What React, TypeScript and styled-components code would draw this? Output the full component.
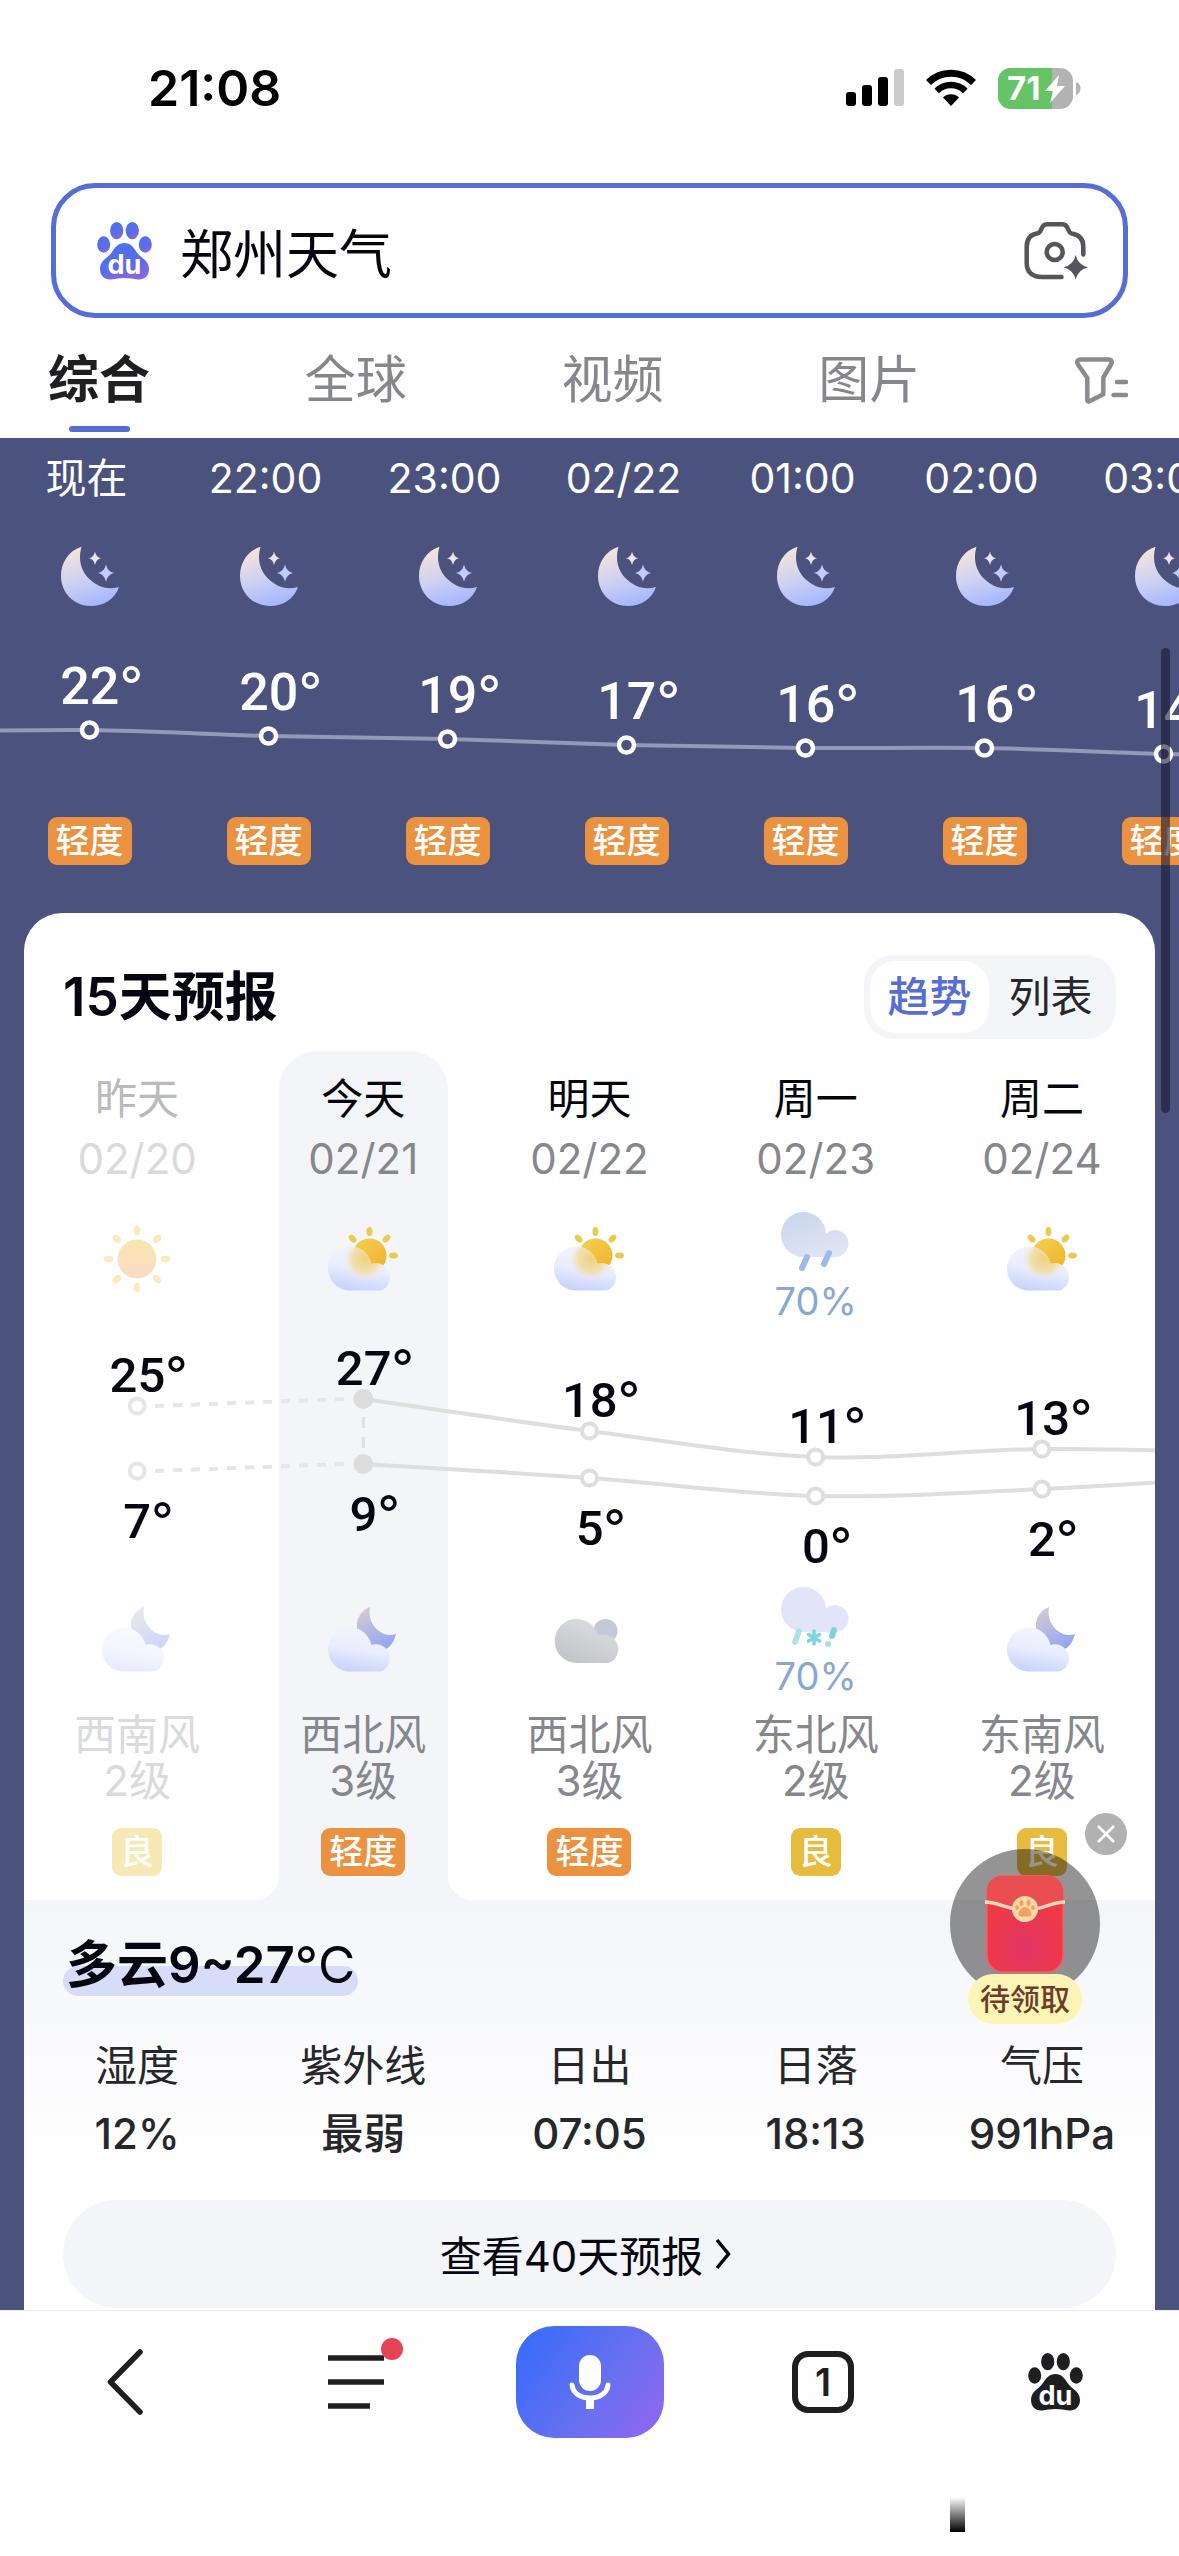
import React, { useState } from "react";
import styled, { createGlobalStyle, css } from "styled-components";

const color = {
  brand: "#566dd6",
  night: "#4b527e",
  panel: "#f4f5f9",
  ink: "#05060f",
  text: "#26272b",
  muted: "#86878c",
  faint: "#d9dadc",
  orange: "#ea923f",
  yellow: "#e6bb3e",
};

const GlobalStyle = createGlobalStyle`
  * { box-sizing: border-box; }
  body {
    margin: 0;
    background: #fff;
    color: ${color.ink};
    font-family: Inter, "Noto Sans CJK SC", sans-serif;
  }
  button, input { font: inherit; color: inherit; border: 0; padding: 0; background: none; }
  h2, h3, p, dl, dt, dd { margin: 0; font-weight: inherit; }
`;

/* ---------- data ---------- */

type Level = "轻度" | "良";
type Sky = "sun" | "partly" | "rain" | "nightCloud" | "overcast" | "sleet";

const hours: { time: string; temp: number; y: number; air: Level }[] = [
  { time: "现在", temp: 22, y: 124, air: "轻度" },
  { time: "22:00", temp: 20, y: 130, air: "轻度" },
  { time: "23:00", temp: 19, y: 133, air: "轻度" },
  { time: "02/22", temp: 17, y: 139, air: "轻度" },
  { time: "01:00", temp: 16, y: 142, air: "轻度" },
  { time: "02:00", temp: 16, y: 142, air: "轻度" },
  { time: "03:00", temp: 14, y: 148, air: "轻度" },
];

interface Day {
  name: string;
  date: string;
  day: Sky;
  night: Sky;
  rain?: string;
  high: number;
  low: number;
  highY: number;
  lowY: number;
  wind: string;
  force: string;
  air: Level;
  past?: boolean;
}

const days: Day[] = [
  { name: "昨天", date: "02/20", day: "sun", night: "nightCloud", high: 25, low: 7, highY: 77, lowY: 142, wind: "西南风", force: "2级", air: "良", past: true },
  { name: "今天", date: "02/21", day: "partly", night: "nightCloud", high: 27, low: 9, highY: 70, lowY: 135, wind: "西北风", force: "3级", air: "轻度" },
  { name: "明天", date: "02/22", day: "partly", night: "overcast", high: 18, low: 5, highY: 102, lowY: 149, wind: "西北风", force: "3级", air: "轻度" },
  { name: "周一", date: "02/23", day: "rain", night: "sleet", rain: "70%", high: 11, low: 0, highY: 128, lowY: 167, wind: "东北风", force: "2级", air: "良" },
  { name: "周二", date: "02/24", day: "partly", night: "nightCloud", high: 13, low: 2, highY: 120, lowY: 160, wind: "东南风", force: "2级", air: "良" },
];

const metrics = [
  ["湿度", "12%"],
  ["紫外线", "最弱"],
  ["日出", "07:05"],
  ["日落", "18:13"],
  ["气压", "991hPa"],
];

/* ---------- drawings ---------- */

const DefsSvg = styled.svg`
  position: absolute;
  width: 0;
  height: 0;
`;

const SharedDefs = () => (
  <DefsSvg aria-hidden="true">
    <defs>
      <linearGradient id="moon" x1="0.3" y1="0" x2="0.6" y2="1">
        <stop offset="0" stopColor="#f7e4da" />
        <stop offset="0.5" stopColor="#cfd2f0" />
        <stop offset="1" stopColor="#a5b6ff" />
      </linearGradient>
      <linearGradient id="crescent" x1="0.1" y1="0" x2="0.6" y2="1">
        <stop offset="0" stopColor="#dccbd0" />
        <stop offset="0.5" stopColor="#b3b9e4" />
        <stop offset="1" stopColor="#93a6f2" />
      </linearGradient>
      <linearGradient id="cloud" x1="0.6" y1="0" x2="0.35" y2="1">
        <stop offset="0" stopColor="#f3f5fd" />
        <stop offset="0.5" stopColor="#e9edfd" />
        <stop offset="1" stopColor="#c7d2fd" />
      </linearGradient>
      <linearGradient id="gold" x1="0" y1="0" x2="0.6" y2="1">
        <stop offset="0" stopColor="#f5cf55" />
        <stop offset="1" stopColor="#efb52d" />
      </linearGradient>
      <linearGradient id="warmSun" x1="0.5" y1="0" x2="0.5" y2="1">
        <stop offset="0" stopColor="#f5c84e" />
        <stop offset="1" stopColor="#f3b083" />
      </linearGradient>
      <radialGradient id="glow" cx="37" cy="33" r="22" gradientUnits="userSpaceOnUse">
        <stop offset="0" stopColor="#efd07a" />
        <stop offset="0.6" stopColor="#f1dc9f" stopOpacity="0.8" />
        <stop offset="1" stopColor="#f3ecd8" stopOpacity="0" />
      </radialGradient>
      <linearGradient id="rainCloud" x1="0.2" y1="0" x2="0.7" y2="1">
        <stop offset="0" stopColor="#cbd6ec" />
        <stop offset="1" stopColor="#dfe5f3" />
      </linearGradient>
      <linearGradient id="grayCloud" x1="0.8" y1="0" x2="0.2" y2="1">
        <stop offset="0" stopColor="#dedfe2" />
        <stop offset="1" stopColor="#c2c3c9" />
      </linearGradient>
      <linearGradient id="paw" x1="0.3" y1="0" x2="0.7" y2="1">
        <stop offset="0" stopColor="#4a73ea" />
        <stop offset="0.6" stopColor="#5c6bea" />
        <stop offset="1" stopColor="#8b67dc" />
      </linearGradient>
      <radialGradient id="envelope" cx="0.5" cy="0.75" r="0.6">
        <stop offset="0" stopColor="#e23468" />
        <stop offset="1" stopColor="#ef3a42" />
      </radialGradient>
    </defs>
  </DefsSvg>
);

const MoonStars = () => (
  <svg width="58" height="60" viewBox="0 0 58 60" fill="url(#moon)" aria-hidden="true">
    <path d="M20.5.7C7 5 0 17 0 30c0 17 13 30 30 30 13 0 24-7 28-19-8 2.500-16 1.500-23-3C22 30 16 17 20.500.7Z" />
    <path fill="#ece3ea" d="M34 5.500q1 5.800 6 6.800-5 1-6 6.800-1-5.800-6-6.800 5-1 6-6.800Z" />
    <path fill="#c3cbfa" d="M45 18.500q1.500 7 8 8.500-6.500 1.500-8 8.500-1.500-7-8-8.500 6.500-1.500 8-8.500Z" />
  </svg>
);

const cloudShape = "M22.500 64.500A22 22 0 1 1 43.500 38A13.500 13.500 0 1 1 52.500 64.500Z";

const SkyIcon = ({ kind }: { kind: Sky }) => {
  switch (kind) {
    case "sun":
      return (
        <svg width="70" height="68" viewBox="0 0 70 68" aria-hidden="true">
          {[0, 45, 90, 135, 180, 225, 270, 315].map((a) => (
            <ellipse key={a} cx="35" cy="5.500" rx="3.300" ry="4.800" fill="#f5d36a" transform={`rotate(${a} 35 34)`} />
          ))}
          <circle cx="35" cy="34" r="19.500" fill="url(#warmSun)" />
        </svg>
      );
    case "partly":
      return (
        <svg width="70" height="66" viewBox="0 0 70 66" aria-hidden="true">
          {[-45, 0, 45, 90].map((a) => (
            <ellipse key={a} cx="41.500" cy="5.500" rx="3" ry="4.500" fill="#ecc94f" transform={`rotate(${a} 41.500 29.500)`} />
          ))}
          <circle cx="41.500" cy="29.500" r="17" fill="url(#gold)" />
          <path d={cloudShape} fill="url(#cloud)" />
          <path d={cloudShape} fill="url(#glow)" />
        </svg>
      );
    case "nightCloud":
      return (
        <svg width="70" height="66" viewBox="0 0 70 66" aria-hidden="true">
          <path d="M42 0c-9 3-14 12-13 20 1 13 9 23 21 24 10 0 16-8 18-17-6 2-12 1-17-3C44 19 40 10 42 0Z" fill="url(#crescent)" />
          <path d={cloudShape} fill="url(#cloud)" />
        </svg>
      );
    case "overcast":
      return (
        <svg width="70" height="66" viewBox="-1 -11 70 66" aria-hidden="true">
          <circle cx="50.500" cy="13" r="12" fill="#c5c8d6" />
          <path d="M22 45A22 22 0 1 1 43 17.500A14 14 0 1 1 54 45Z" fill="url(#grayCloud)" />
        </svg>
      );
    case "rain":
      return (
        <svg width="70" height="66" viewBox="-1 -5 70 66" aria-hidden="true">
          <path d="M22 45A22.500 22.500 0 1 1 44 21.500A13.500 13.500 0 1 1 52 45Z" fill="url(#rainCloud)" />
          <g stroke="#9dbbe8" strokeWidth="6" strokeLinecap="round">
            <path d="m25 45-5 11" />
            <path d="m47 41-5 11" />
          </g>
        </svg>
      );
    case "sleet":
      return (
        <svg width="70" height="66" viewBox="-1 -5 70 66" aria-hidden="true">
          <path d="M22 45A22.500 22.500 0 1 1 44 21.500A13.500 13.500 0 1 1 52 45Z" fill="#e2e4fa" />
          <g stroke="#7fd3dc" strokeLinecap="round" fill="none">
            <path d="m17 44-4 11" strokeWidth="5.500" stroke="#a9e1e6" />
            <path d="M32 44v13M26.500 47.500l11 6.500M37.500 47.500l-11 6.500" strokeWidth="3.500" />
            <path d="m52 43-2 6" strokeWidth="6" />
            <path d="M46 57h.1" strokeWidth="6" stroke="#a9e1e6" />
          </g>
        </svg>
      );
  }
};

const PawSvg = styled.svg`
  flex: none;
  overflow: visible;
`;

const PawLogo = ({ fill }: { fill: string }) => (
  <PawSvg width="55" height="58" viewBox="0 0 55 58" role="img" aria-label="百度">
    <g fill={fill}>
      <ellipse cx="19.700" cy="8.700" rx="6.600" ry="8.600" />
      <ellipse cx="35.300" cy="8.700" rx="6.600" ry="8.600" />
      <ellipse cx="6.700" cy="22.500" rx="6.500" ry="8.300" />
      <ellipse cx="48.300" cy="22.500" rx="6.500" ry="8.300" />
      <path d="M27.500 21c6 0 9 4 12 9 4 6 12.500 8 12.500 17 0 7-5 11-11 10.500-5-.5-8-1.500-13.500-1.500s-8.500 1-13.500 1.500C8 58 3 54 3 47c0-9 8-11 12-17 3-5 6.500-9 12.500-9Z" />
    </g>
    <text x="27.500" y="52" textAnchor="middle" fill="#fff" fontSize="27" fontWeight="700">du</text>
  </PawSvg>
);

const CameraIcon = () => (
  <svg width="64" height="58" viewBox="0 0 64 58" fill="none" stroke="#55565c" strokeWidth="4.500" strokeLinecap="round" aria-hidden="true">
    <path d="M37.500 55H18C8 55 2.700 50 2.700 41V25c0-8.500 4-12.700 11-13.700 4.500-.7 2.800-9 9-9h16c6.200 0 4.500 8.300 9 9.200 8 1.300 11.600 6 11.600 13v8" />
    <circle cx="30.700" cy="30" r="8" />
    <path d="M51.700 33q2.300 10 12.300 12.300-10 2.300-12.300 12.300-2.300-10-12.300-12.300 10-2.300 12.300-12.300Z" fill="#55565c" stroke="none" />
  </svg>
);

const FilterIcon = () => (
  <svg width="53" height="47" viewBox="0 0 53 47" fill="none" stroke="#8a8b91" strokeWidth="4.500" strokeLinecap="round" strokeLinejoin="round" aria-hidden="true">
    <path d="M5.500 2.500h28c3 0 4 2.500 2.500 5l-7.700 13.200v16.600L14 44.500c-1 .3-1.700-.2-1.700-1.500V21L3 7.500c-1.500-2.500-.5-5 2.500-5Z" />
    <path d="M42 25h9M38.500 38H51" />
  </svg>
);

const SignalIcon = () => (
  <svg width="58" height="38" viewBox="0 0 58 38" aria-hidden="true">
    <rect x="0" y="23" width="10" height="14" rx="3" />
    <rect x="16" y="16" width="10" height="21" rx="3" />
    <rect x="32" y="8" width="10" height="29" rx="3" />
    <rect x="48" y="0" width="10" height="37" rx="3" fill="#cbcbcb" />
  </svg>
);

const WifiIcon = () => (
  <svg width="50" height="38" viewBox="0 0 50 38" fill="none" stroke="#000" strokeWidth="7" aria-hidden="true">
    <path d="M2.500 13.500a32 32 0 0 1 45 0" />
    <path d="M10.700 22a20.300 20.300 0 0 1 28.600 0" strokeWidth="6.500" />
    <path d="M25 37l-8-8.500a11.500 11.500 0 0 1 16 0Z" fill="#000" stroke="none" />
  </svg>
);

const BatteryIcon = () => (
  <svg width="84" height="41" viewBox="0 0 84 41" role="img" aria-label="71%">
    <rect width="75" height="41" rx="13" fill="#b3b3b3" />
    <path d="M13 0h41v41H13A13 13 0 0 1 0 28V13A13 13 0 0 1 13 0Z" fill="#65c466" />
    <path d="M78 14c6 2 6 11 0 13Z" fill="#b3b3b3" />
    <text x="9" y="32" fill="#fff" fontSize="33" fontWeight="700">71</text>
    <path d="M61 7 47 23h8l-3 12 15-17h-8Z" fill="#fff" />
  </svg>
);

const RedEnvelope = () => (
  <svg width="80" height="98" viewBox="0 0 80 98" aria-hidden="true">
    <rect x="2" y="1" width="76" height="96" rx="16" fill="url(#envelope)" stroke="#ff5a62" strokeWidth="1.500" />
    <path d="M2 17C2 7 8 1 18 1h44c10 0 16 6 16 16v10C66 27 56 35 40 35S14 27 2 27Z" fill="#ea4e50" />
    <path d="M0 27c14 0 22 8 40 8s26-8 40-8" fill="none" stroke="#fbd5bd" strokeWidth="3.500" />
    <circle cx="40" cy="34" r="13" fill="#fbd8a8" />
    <g fill="#f0a263">
      <ellipse cx="36.500" cy="28" rx="2" ry="3" />
      <ellipse cx="43.500" cy="28" rx="2" ry="3" />
      <ellipse cx="32" cy="32.500" rx="1.800" ry="2.600" />
      <ellipse cx="48" cy="32.500" rx="1.800" ry="2.600" />
      <path d="M40 32c3 0 7 4.500 6.500 7.500-.5 2.500-3.500 2-6.500 2s-6 .5-6.500-2C33 36.500 37 32 40 32Z" />
    </g>
  </svg>
);

/* ---------- charts ---------- */

type Point = { x: number; y: number };

const curve = (pts: Point[]) =>
  pts.reduce((d, p, i) => {
    if (i === 0) return `M${p.x} ${p.y}`;
    const a = pts[i - 2] ?? pts[i - 1];
    const b = pts[i - 1];
    const c = pts[i + 1] ?? p;
    return `${d}C${b.x + (p.x - a.x) / 6} ${b.y + (p.y - a.y) / 6} ${p.x - (c.x - b.x) / 6} ${p.y - (c.y - b.y) / 6} ${p.x} ${p.y}`;
  }, "");

const ChartText = styled.text`
  font-family: Roboto, "Noto Sans CJK SC", sans-serif;
  font-weight: 500;
`;

const DegreeSign = styled.tspan`
  font-family: Inter, sans-serif;
  font-weight: 400;
`;

const DIGIT = 0.5615;

/* The digits are centred on x and the degree sign hangs to their right. */
const Degrees = ({ x, y, value, size, fill }: Point & { value: number; size: number; fill: string }) => (
  <ChartText x={x - (String(value).length * DIGIT * size) / 2} y={y} fontSize={size} fill={fill}>
    {value}
    <DegreeSign>°</DegreeSign>
  </ChartText>
);

const HOUR = 179;

const HourlyChart = () => {
  const pts = hours.map((h, i) => ({ x: HOUR * (i + 0.5), y: h.y }));
  const ends = [{ x: -HOUR / 2, y: 126 }, ...pts, { x: HOUR * 7.5, y: 150 }];
  return (
    <svg width={HOUR * 7} height="211" viewBox={`0 0 ${HOUR * 7} 211`} role="img" aria-label="逐小时气温">
      <path d={curve(ends)} fill="none" stroke="#9498ba" strokeWidth="4" />
      {pts.map((p, i) => (
        <g key={p.x}>
          <circle cx={p.x} cy={p.y} r="7.500" fill={color.night} stroke="#fff" strokeWidth="4.500" />
          <Degrees x={p.x} y={p.y - 26} value={hours[i].temp} size={52} fill="#fff" />
        </g>
      ))}
    </svg>
  );
};

const DAY = 226.2;

const TrendSvg = styled.svg`
  grid-column: 1 / -1;
  grid-row: 3;
  display: block;
  width: 100%;
  height: auto;
`;

const TrendChart = () => {
  const highs = days.map((d, i) => ({ x: DAY * (i + 0.5), y: d.highY }));
  const lows = days.map((d, i) => ({ x: DAY * (i + 0.5), y: d.lowY }));
  const series = [
    { pts: highs, next: 124, label: -14, key: "high" as const },
    { pts: lows, next: 146, label: 67, key: "low" as const },
  ];
  return (
    <TrendSvg viewBox="0 0 1131 241" role="img" aria-label="15天气温趋势">
      <path
        d={`M${highs[1].x} ${highs[1].y + 18}V${lows[1].y - 12}`}
        stroke="#dfdfe0"
        strokeWidth="3"
        strokeDasharray="11 9"
      />
      {series.map(({ pts, next, label, key }) => (
        <g key={key}>
          <path
            d={`M${pts[0].x + 18} ${pts[0].y}L${pts[1].x - 18} ${pts[1].y}`}
            stroke="#e6e6e7"
            strokeWidth="4"
            strokeDasharray="9 9"
          />
          <path d={curve([...pts.slice(1), { x: DAY * 5.5, y: next }])} fill="none" stroke="#dedede" strokeWidth="4" />
          {pts.map((p, i) => (
            <g key={p.x}>
              {i === 1 ? (
                <circle cx={p.x} cy={p.y} r="10" fill="#dcdcdc" />
              ) : (
                <circle cx={p.x} cy={p.y} r="7.500" fill="#fff" stroke={i ? "#dedede" : "#e6e6e6"} strokeWidth="4" />
              )}
              <Degrees x={p.x} y={p.y + label} value={days[i][key]} size={49} fill={color.ink} />
            </g>
          ))}
        </g>
      ))}
    </TrendSvg>
  );
};

/* ---------- page shell ---------- */

const Screen = styled.div`
  display: flex;
  flex-direction: column;
  height: 100vh;
  overflow: hidden;
  background: #fefefe;
`;

const StatusBar = styled.header`
  display: flex;
  align-items: center;
  justify-content: space-between;
  flex: none;
  height: 176px;
  padding: 0 97px 0 148px;
  color: #000;
`;

const Clock = styled.time`
  font-size: 50px;
  font-weight: 600;
  line-height: 60px;
`;

const StatusIcons = styled.div`
  display: flex;
  align-items: center;
  gap: 22px;
`;

const SearchBox = styled.form`
  display: flex;
  align-items: center;
  gap: 28px;
  flex: none;
  height: 135px;
  margin: 7px 51px 0;
  padding: 0 35px 0 41px;
  border: 5px solid ${color.brand};
  border-radius: 44px;
`;

const SearchInput = styled.input`
  flex: 1;
  min-width: 0;
  height: 80px;
  font-size: 53px;
  outline: none;
`;

const IconButton = styled.button`
  display: flex;
  align-items: center;
  justify-content: center;
  cursor: pointer;
`;

const Tabs = styled.nav`
  display: flex;
  justify-content: space-between;
  flex: none;
  padding: 28px 51px 6px 48px;
`;

const Tab = styled.a<{ $active?: boolean }>`
  display: flex;
  flex-direction: column;
  align-items: center;
  gap: 12px;
  font-size: 51px;
  line-height: 68px;
  text-decoration: none;
  color: ${(p) => (p.$active ? "#1f1f21" : "#86878c")};
  font-weight: ${(p) => (p.$active ? 700 : 400)};
  &::after {
    content: "";
    width: 61px;
    height: 6px;
    border-radius: 3px;
    background: ${(p) => (p.$active ? color.brand : "transparent")};
  }
`;

const FilterButton = styled(IconButton)`
  height: 68px;
`;

const Body = styled.div`
  position: relative;
  flex: 1;
  min-height: 0;
  background: ${color.night};
`;

const Scroller = styled.main`
  height: 100%;
  overflow: hidden auto;
  scrollbar-width: none;
`;

const ScrollThumb = styled.div`
  position: absolute;
  top: 210px;
  right: 9px;
  width: 9px;
  height: 465px;
  border-radius: 5px;
  background: rgba(24, 25, 48, 0.6);
`;

/* ---------- hourly ---------- */

const Hourly = styled.section`
  padding: 12px 0 48px;
  overflow: hidden;
  color: #fff;
`;

const HourGrid = styled.div`
  display: grid;
  grid-template-columns: repeat(7, ${HOUR}px);
  justify-items: center;
`;

const HourTime = styled.div`
  padding-right: 6px;
  font-size: 41px;
  line-height: 56px;
`;

const HourIcon = styled.div`
  display: flex;
  height: 60px;
  margin-top: 40px;
`;

const HourTrend = styled.div`
  display: flex;
  grid-column: 1 / -1;
`;

const Badge = styled.span<{ $level: Level; $faded?: boolean }>`
  padding: 0 8px;
  border-radius: 9px;
  font-size: 34px;
  font-weight: 500;
  line-height: 48px;
  color: #fff;
  background: ${(p) => (p.$level === "良" ? color.yellow : color.orange)};
  ${(p) =>
    p.$faded &&
    css`
      background: #f6e9b5;
    `}
`;

/* ---------- 15-day card ---------- */

const Card = styled.section`
  margin: 0 24px;
  padding: 42px 0 24px;
  border-radius: 38px 38px 0 0;
  background: #fff;
`;

const CardHead = styled.div`
  display: flex;
  align-items: center;
  justify-content: space-between;
  padding: 0 39px;
`;

const CardTitle = styled.h2`
  font-size: 53px;
  font-weight: 600;
  line-height: 84px;
`;

const Switch = styled.div`
  display: flex;
  gap: 2px;
  padding: 6px;
  border-radius: 30px;
  background: ${color.panel};
`;

const SwitchButton = styled.button<{ $active: boolean }>`
  width: 119px;
  border-radius: 26px;
  font-size: 42px;
  line-height: 72px;
  font-weight: ${(p) => (p.$active ? 500 : 400)};
  color: ${(p) => (p.$active ? color.brand : color.text)};
  background: ${(p) => (p.$active ? "#fff" : "transparent")};
  cursor: pointer;
`;

const Trend = styled.div`
  display: grid;
  grid-template-columns: repeat(5, 1fr);
  grid-template-rows: 138px 140px auto 140px 94px 96px;
  margin-top: 12px;
  isolation: isolate;
`;

const TodayBand = styled.div`
  position: relative;
  z-index: -1;
  grid-column: 2;
  grid-row: 1 / -1;
  justify-self: center;
  width: 169px;
  border-radius: 38px 38px 0 0;
  background: ${color.panel};
  &::before,
  &::after {
    content: "";
    position: absolute;
    bottom: 0;
    width: 24px;
    height: 24px;
  }
  &::before {
    right: 100%;
    background: radial-gradient(circle at 0 0, transparent 24px, ${color.panel} 24px);
  }
  &::after {
    left: 100%;
    background: radial-gradient(circle at 100% 0, transparent 24px, ${color.panel} 24px);
  }
`;

const DayColumn = styled.article<{ $index: number }>`
  display: grid;
  grid-template-rows: subgrid;
  grid-column: ${(p) => p.$index + 1};
  grid-row: 1 / -1;
  justify-items: center;
  text-align: center;
  font-size: 42px;
`;

const DayHead = styled.div`
  padding-top: 18px;
  line-height: 60px;
`;

const DayName = styled.h3<{ $past?: boolean }>`
  font-size: inherit;
  color: ${(p) => (p.$past ? "#b9babc" : color.ink)};
`;

const DayDate = styled.p<{ $past?: boolean }>`
  color: ${(p) => (p.$past ? color.faint : color.muted)};
`;

const SkyCell = styled.div<{ $faded?: boolean; $lowered?: boolean; $row: number }>`
  grid-row: ${(p) => p.$row};
  display: flex;
  flex-direction: column;
  align-items: center;
  justify-content: center;
  gap: 6px;
  padding-top: ${(p) => (p.$lowered ? 12 : 0)}px;
  opacity: ${(p) => (p.$faded ? 0.45 : 1)};
`;

const RainChance = styled.span`
  font-size: 38px;
  line-height: 44px;
  color: #88a7d1;
`;

const Wind = styled.p<{ $past?: boolean }>`
  grid-row: 5;
  padding-top: 2px;
  line-height: 46px;
  color: ${(p) => (p.$past ? color.faint : color.muted)};
`;

const AirCell = styled.div`
  grid-row: 6;
  display: flex;
  align-items: center;
`;

const Detail = styled.div`
  padding: 28px 0 0;
  background: linear-gradient(${color.panel}, #fff 280px);
`;

const Summary = styled.h3`
  position: relative;
  z-index: 0;
  width: fit-content;
  margin-left: 39px;
  padding: 0 3px;
  font-size: 51px;
  font-weight: 600;
  line-height: 74px;
  &::before {
    content: "";
    position: absolute;
    z-index: -1;
    inset: auto 0 6px;
    height: 30px;
    border-radius: 15px;
    background: #d7dcf8;
  }
`;

const Unit = styled.span`
  font-weight: 400;
`;

const Metrics = styled.dl`
  display: grid;
  grid-template-columns: repeat(5, 1fr);
  margin-top: 34px;
  text-align: center;
  font-size: 42px;
  line-height: 60px;
  color: ${color.text};
`;

const MetricValue = styled.dd`
  margin-top: 8px;
  font-weight: 500;
`;

const MoreButton = styled.button`
  display: flex;
  align-items: center;
  justify-content: center;
  gap: 12px;
  width: calc(100% - 78px);
  height: 108px;
  margin: 36px 39px 0;
  padding-right: 8px;
  border-radius: 54px;
  font-size: 42px;
  background: ${color.panel};
  cursor: pointer;
`;

/* ---------- floating reward ---------- */

const Reward = styled.aside`
  position: absolute;
  right: 79px;
  bottom: 286px;
  display: flex;
  flex-direction: column;
  align-items: center;
`;

const RewardDisc = styled.button`
  display: flex;
  align-items: center;
  justify-content: center;
  width: 150px;
  height: 150px;
  border-radius: 50%;
  background: rgba(0, 0, 0, 0.42);
  cursor: pointer;
`;

const RewardLabel = styled.span`
  margin-top: -25px;
  padding: 0 12px;
  border-radius: 25px;
  font-size: 30px;
  font-weight: 500;
  line-height: 50px;
  color: #6e3d2a;
  background: #fcf5b6;
`;

const CloseButton = styled(IconButton)`
  position: absolute;
  top: -36px;
  right: -27px;
  width: 42px;
  height: 42px;
  border-radius: 50%;
  background: #b1b1b1;
`;

/* ---------- bottom bar ---------- */

const BottomBar = styled.nav`
  position: relative;
  display: grid;
  grid-template-columns: repeat(5, 1fr);
  flex: none;
  align-items: start;
  height: 246px;
  padding: 15px 7px 0 9px;
  border-top: 1px solid #ebebed;
  background: #fefefe;
`;

const BarButton = styled(IconButton)`
  height: 112px;
`;

const MenuGlyph = styled.span`
  position: relative;
  display: flex;
  margin-right: 4px;
`;

const Dot = styled.i`
  position: absolute;
  top: -17px;
  right: -19px;
  width: 22px;
  height: 22px;
  border-radius: 50%;
  background: #e84354;
`;

const Mic = styled.span`
  display: flex;
  align-items: center;
  justify-content: center;
  width: 148px;
  height: 112px;
  border-radius: 38px;
  background: linear-gradient(125deg, #3a6cf9 8%, #6a70f0 60%, #9565f0 100%);
`;

const TabCount = styled.span`
  width: 62px;
  height: 62px;
  border: 6px solid #1f1f21;
  border-radius: 16px;
  font-size: 38px;
  font-weight: 600;
  line-height: 50px;
  color: #1f1f21;
`;

const Stamp = styled.i`
  position: absolute;
  right: 214px;
  bottom: 24px;
  width: 15px;
  height: 35px;
  background: linear-gradient(#fff, #000);
`;

export default function App() {
  const [view, setView] = useState("趋势");
  return (
    <Screen>
      <GlobalStyle />
      <SharedDefs />
      <StatusBar>
        <Clock>21:08</Clock>
        <StatusIcons>
          <SignalIcon />
          <WifiIcon />
          <BatteryIcon />
        </StatusIcons>
      </StatusBar>

      <SearchBox role="search">
        <PawLogo fill="url(#paw)" />
        <SearchInput type="text" aria-label="搜索" defaultValue="郑州天气" />
        <IconButton type="button" aria-label="拍照搜索">
          <CameraIcon />
        </IconButton>
      </SearchBox>

      <Tabs>
        {["综合", "全球", "视频", "图片"].map((t, i) => (
          <Tab key={t} href="#" $active={i === 0}>
            {t}
          </Tab>
        ))}
        <FilterButton aria-label="筛选">
          <FilterIcon />
        </FilterButton>
      </Tabs>

      <Body>
        <Scroller>
          <Hourly>
            <HourGrid>
              {hours.map((h) => (
                <HourTime key={h.time}>{h.time}</HourTime>
              ))}
              {hours.map((h) => (
                <HourIcon key={h.time}>
                  <MoonStars />
                </HourIcon>
              ))}
              <HourTrend>
                <HourlyChart />
              </HourTrend>
              {hours.map((h) => (
                <Badge key={h.time} $level={h.air}>
                  {h.air}
                </Badge>
              ))}
            </HourGrid>
          </Hourly>

          <Card>
            <CardHead>
              <CardTitle>15天预报</CardTitle>
              <Switch>
                {["趋势", "列表"].map((v) => (
                  <SwitchButton key={v} $active={v === view} aria-pressed={v === view} onClick={() => setView(v)}>
                    {v}
                  </SwitchButton>
                ))}
              </Switch>
            </CardHead>

            <Trend>
              <TodayBand />
              {days.map((d, i) => (
                <DayColumn key={d.date} $index={i}>
                  <DayHead>
                    <DayName $past={d.past}>{d.name}</DayName>
                    <DayDate $past={d.past}>{d.date}</DayDate>
                  </DayHead>
                  <SkyCell $row={2} $faded={d.past} $lowered={!!d.rain}>
                    <SkyIcon kind={d.day} />
                    {d.rain && <RainChance>{d.rain}</RainChance>}
                  </SkyCell>
                  <SkyCell $row={4} $faded={d.past}>
                    <SkyIcon kind={d.night} />
                    {d.rain && <RainChance>{d.rain}</RainChance>}
                  </SkyCell>
                  <Wind $past={d.past}>
                    {d.wind}
                    <br />
                    {d.force}
                  </Wind>
                  <AirCell>
                    <Badge $level={d.air} $faded={d.past}>
                      {d.air}
                    </Badge>
                  </AirCell>
                </DayColumn>
              ))}
              <TrendChart />
            </Trend>

            <Detail>
              <Summary>
                多云9~27<Unit>°C</Unit>
              </Summary>
              <Metrics>
                {metrics.map(([label, value]) => (
                  <div key={label}>
                    <dt>{label}</dt>
                    <MetricValue>{value}</MetricValue>
                  </div>
                ))}
              </Metrics>
              <MoreButton>
                查看40天预报
                <svg width="16" height="32" viewBox="0 0 16 32" fill="none" stroke={color.ink} strokeWidth="3.500" aria-hidden="true">
                  <path d="m2 2 11.500 14L2 30" />
                </svg>
              </MoreButton>
            </Detail>
          </Card>
        </Scroller>
        <ScrollThumb />
        <Reward>
          <RewardDisc aria-label="领取红包">
            <RedEnvelope />
          </RewardDisc>
          <RewardLabel>待领取</RewardLabel>
          <CloseButton aria-label="关闭">
            <svg width="18" height="18" viewBox="0 0 18 18" stroke="#fff" strokeWidth="2.500" aria-hidden="true">
              <path d="m1 1 16 16M17 1 1 17" />
            </svg>
          </CloseButton>
        </Reward>
      </Body>

      <BottomBar>
        <BarButton aria-label="返回">
          <svg width="36" height="66" viewBox="0 0 36 66" fill="none" stroke="#1f1f21" strokeWidth="5.500" strokeLinecap="round" strokeLinejoin="round" aria-hidden="true">
            <path d="M33 3 3.500 33 33 63" />
          </svg>
        </BarButton>
        <BarButton aria-label="菜单">
          <MenuGlyph>
            <svg width="56" height="54" viewBox="0 0 56 54" stroke="#1f1f21" strokeWidth="5.500" aria-hidden="true">
              <path d="M0 3h56M0 27h56M0 51h42" />
            </svg>
            <Dot />
          </MenuGlyph>
        </BarButton>
        <BarButton aria-label="语音搜索">
          <Mic>
            <svg width="42" height="56" viewBox="0 0 42 56" fill="none" stroke="#fff" strokeLinecap="round" aria-hidden="true">
              <rect x="10" y="1" width="22" height="36" rx="11" fill="#fff" stroke="none" />
              <path d="M3 31c1 8 8 13 18 13s17-5 18-13" strokeWidth="5" />
              <path d="M21 44v11" strokeWidth="8" strokeLinecap="butt" />
            </svg>
          </Mic>
        </BarButton>
        <BarButton aria-label="标签页">
          <TabCount>1</TabCount>
        </BarButton>
        <BarButton aria-label="首页">
          <PawLogo fill="#1f1f21" />
        </BarButton>
        <Stamp />
      </BottomBar>
    </Screen>
  );
}
